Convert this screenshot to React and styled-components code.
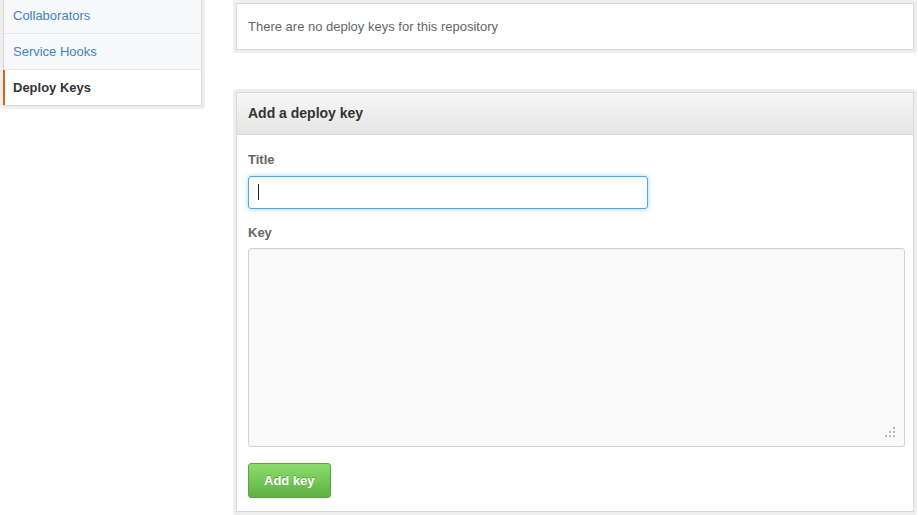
import React from "react";
import styled, { createGlobalStyle } from "styled-components";

const GlobalStyle = createGlobalStyle`
  html, body {
    margin: 0;
    padding: 0;
    background: #fff;
    font-family: "Liberation Sans", Arial, Helvetica, sans-serif;
    font-size: 13px;
    color: #333;
    overflow: hidden;
  }
`;

const Page = styled.div`
  display: flex;
  align-items: flex-start;
  gap: 28px;
  width: 917px;
  margin-top: -6px;
`;

// frame around a menu / box, old github style
const Frame = styled.div`
  background: #eee;
  padding: 3px;
  border-radius: 3px;
  box-sizing: border-box;
`;

const SideFrame = styled(Frame)`
  width: 205px;
  flex: none;
`;

const Menu = styled.ul`
  list-style: none;
  margin: 0;
  padding: 0;
  border: 1px solid #d8d8d8;
  background: #f7f9fb;
`;

const MenuItem = styled.li`
  position: relative;
  height: 35px;
  line-height: 36px;
  padding-left: 9px;
  border-bottom: 1px solid #e4e6e8;
  background: ${(p) => (p.$active ? "#fff" : "#f7f9fb")};
  color: ${(p) => (p.$active ? "#333" : "#4183c4")};
  font-weight: ${(p) => (p.$active ? "bold" : "normal")};

  &:last-child {
    border-bottom: none;
  }

  ${(p) =>
    p.$active &&
    `
    &::before {
      content: "";
      position: absolute;
      left: -1px;
      top: 0;
      bottom: 0;
      width: 2px;
      background: #d26911;
    }
  `}
`;

const Main = styled.div`
  flex: 1;
  display: flex;
  flex-direction: column;
  gap: 36px;
  margin-top: 6px;
`;

const BoxInner = styled.div`
  border: 1px solid #d8d8d8;
  background: #fff;
`;

const BoxHeader = styled.h3`
  margin: 0;
  height: 41px;
  line-height: 41px;
  padding: 0 11px;
  font-size: 14px;
  font-weight: bold;
  color: #333;
  background: linear-gradient(#f7f7f7, #e5e5e5);
  border-bottom: 1px solid #d8d8d8;
`;

const BoxBody = styled.div`
  padding: ${(p) => p.$pad || "13px 11px 12px"};
  line-height: 20px;
  color: #666;
`;

const Label = styled.label`
  display: block;
  font-weight: bold;
  color: #666;
  line-height: 18px;
  margin-bottom: ${(p) => p.$mb || "7px"};
`;

const Field = styled.div`
  position: relative;
  width: ${(p) => p.$w || "auto"};
  margin-bottom: ${(p) => p.$mb || "0"};
`;

const TextInput = styled.input`
  display: block;
  box-sizing: border-box;
  width: 400px;
  height: 33px;
  padding: 0 9px;
  border: 1px solid #51a7e8;
  border-radius: 3px;
  outline: none;
  box-shadow: 0 0 5px rgba(81, 167, 232, 0.5), inset 0 1px 2px rgba(0, 0, 0, 0.05);
  font: 13px "Liberation Sans", Arial, sans-serif;
  caret-color: transparent;
`;

const Caret = styled.span`
  position: absolute;
  left: 10px;
  top: 8px;
  width: 1px;
  height: 16px;
  background: #222;
`;

const KeyArea = styled.textarea`
  display: block;
  box-sizing: border-box;
  width: 100%;
  height: 199px;
  border: 1px solid #d2d2d2;
  border-radius: 3px;
  background: #fafafa;
  box-shadow: inset 0 1px 2px rgba(0, 0, 0, 0.04);
  resize: none;
  outline: none;
  font: 13px "Liberation Mono", monospace;
`;

const Grip = styled.svg`
  position: absolute;
  right: 9px;
  bottom: 8px;
`;

const GreenButton = styled.button`
  height: 35px;
  padding: 0 15px;
  border: 1px solid #56a73d;
  border-radius: 3px;
  background: linear-gradient(#8add6d, #60b044);
  color: #fff;
  font: bold 13px "Liberation Sans", Arial, sans-serif;
  text-shadow: 0 -1px 0 rgba(0, 0, 0, 0.25);
  cursor: pointer;
`;

export default function App() {
  return (
    <>
      <GlobalStyle />
      <Page>
        <SideFrame>
          <Menu>
            <MenuItem>Collaborators</MenuItem>
            <MenuItem>Service Hooks</MenuItem>
            <MenuItem $active>Deploy Keys</MenuItem>
          </Menu>
        </SideFrame>

        <Main>
          <Frame>
            <BoxInner>
              <BoxBody>There are no deploy keys for this repository</BoxBody>
            </BoxInner>
          </Frame>

          <Frame>
            <BoxInner>
              <BoxHeader>Add a deploy key</BoxHeader>
              <BoxBody $pad="16px 8px 13px 11px">
                <Label>Title</Label>
                <Field $w="400px" $mb="15px">
                  <TextInput type="text" />
                  <Caret />
                </Field>
                <Label $mb="6px">Key</Label>
                <Field $mb="16px">
                  <KeyArea />
                  <Grip width="12" height="12" viewBox="0 0 12 12">
                    <g fill="#b5b5b5">
                      <rect x="9" y="0" width="2" height="2" />
                      <rect x="5" y="4" width="2" height="2" />
                      <rect x="9" y="4" width="2" height="2" />
                      <rect x="1" y="8" width="2" height="2" />
                      <rect x="5" y="8" width="2" height="2" />
                      <rect x="9" y="8" width="2" height="2" />
                    </g>
                  </Grip>
                </Field>
                <GreenButton>Add key</GreenButton>
              </BoxBody>
            </BoxInner>
          </Frame>
        </Main>
      </Page>
    </>
  );
}
